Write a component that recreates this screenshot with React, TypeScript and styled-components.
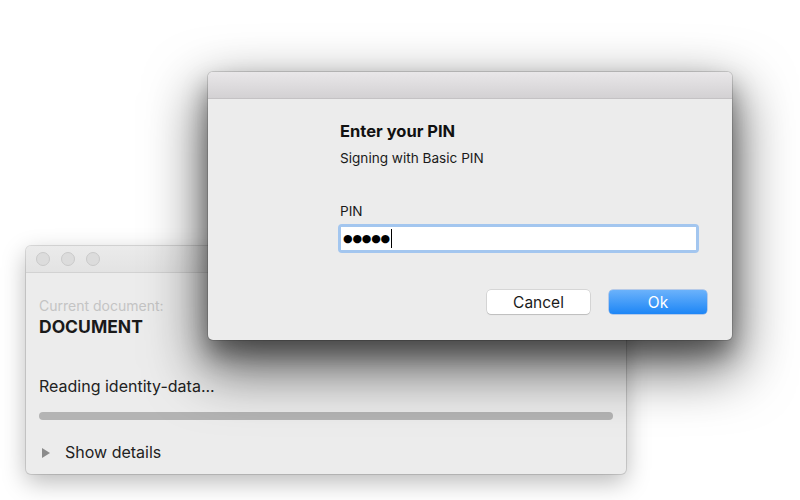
import React from "react";
import styled, { createGlobalStyle } from "styled-components";

const GlobalStyle = createGlobalStyle`
  html, body { margin: 0; padding: 0; background: #ffffff; }
  body { font-family: "Inter", "Roboto", "Liberation Sans", sans-serif; -webkit-font-smoothing: antialiased; }
  * { box-sizing: border-box; }
`;

const Desktop = styled.div`
  position: relative;
  width: 800px;
  height: 500px;
  overflow: hidden;
  background: #ffffff;
`;

const Window = styled.div<{ $left: number; $top: number; $w: number; $h: number; $active?: boolean }>`
  position: absolute;
  left: ${(p) => p.$left}px;
  top: ${(p) => p.$top}px;
  width: ${(p) => p.$w}px;
  height: ${(p) => p.$h}px;
  background: #ececec;
  border-radius: 5px;
  display: flex;
  flex-direction: column;
  overflow: hidden;
  box-shadow: ${(p) =>
    p.$active
      ? "0 0 0 1px rgba(0,0,0,0.14), 0 14px 24px rgba(0,0,0,0.35), 0 24px 55px 6px rgba(0,0,0,0.6)"
      : "0 0 0 1px rgba(0,0,0,0.12), 0 8px 24px rgba(0,0,0,0.28)"};
`;

const TitleBar = styled.div<{ $active?: boolean }>`
  height: 27px;
  flex: none;
  display: flex;
  align-items: center;
  gap: 11px;
  padding-left: 10px;
  background: ${(p) => (p.$active ? "linear-gradient(#e9e7e9, #d3d1d3)" : "linear-gradient(#ebebeb, #e3e3e3)")};
  border-bottom: 1px solid ${(p) => (p.$active ? "#c4c2c4" : "#d2d2d2")};
`;

const Light = styled.span`
  width: 14px;
  height: 14px;
  border-radius: 50%;
  background: #dcdcdc;
  border: 1px solid #c9c9c9;
`;

const BackBody = styled.div`
  flex: 1;
  display: flex;
  flex-direction: column;
  padding: 24px 13px 0 13px;
`;

const Caption = styled.div`
  font-size: 14px;
  line-height: 17px;
  color: #c4c4c4;
`;

const DocName = styled.div`
  font-size: 17.5px;
  line-height: 21px;
  font-weight: 700;
  color: #1a1a1a;
  margin-top: 2px;
`;

const Status = styled.div`
  font-size: 16px;
  line-height: 19px;
  color: #222;
  margin-top: 40px;
`;

const Progress = styled.div`
  height: 8px;
  border-radius: 4px;
  background: #b4b4b4;
  margin-top: 16px;
`;

const Disclosure = styled.div`
  display: flex;
  align-items: center;
  gap: 15px;
  margin-top: 23px;
  padding-left: 3px;
  font-size: 16px;
  line-height: 19px;
  color: #222;
`;

const Triangle = styled.span`
  width: 0;
  height: 0;
  border-top: 5px solid transparent;
  border-bottom: 5px solid transparent;
  border-left: 8px solid #8b8b8b;
`;

const DialogBody = styled.div`
  flex: 1;
  display: flex;
  flex-direction: column;
  padding: 22px 33px 0 130px;
`;

const DialogTitle = styled.div`
  font-size: 16.5px;
  line-height: 20px;
  font-weight: 700;
  color: #111;
  padding-left: 2px;
`;

const DialogText = styled.div<{ $mt: number }>`
  font-size: 13.6px;
  line-height: 16px;
  color: #1a1a1a;
  margin-top: ${(p) => p.$mt}px;
  padding-left: 2px;
`;

const Field = styled.div`
  margin-top: 5px;
  height: 29px;
  border-radius: 4px;
  background: #a3c6ef;
  padding: 3px;
`;

const FieldInner = styled.div`
  height: 23px;
  background: #ffffff;
  display: flex;
  align-items: center;
  padding-left: 2px;
`;

const Mask = styled.span`
  font-family: "DejaVu Sans", sans-serif;
  font-size: 11px;
  letter-spacing: -0.2px;
  color: #000;
`;

const Caret = styled.span`
  width: 1px;
  height: 19px;
  background: #000;
  margin-left: 1px;
`;

const Buttons = styled.div`
  display: flex;
  justify-content: flex-end;
  gap: 19px;
  margin-top: 37px;
  margin-right: -8px;
`;

const Button = styled.div<{ $primary?: boolean; $w: number }>`
  width: ${(p) => p.$w}px;
  height: 24px;
  border-radius: 4px;
  display: flex;
  align-items: center;
  justify-content: center;
  font-size: 15.5px;
  color: ${(p) => (p.$primary ? "#ffffff" : "#1a1a1a")};
  background: ${(p) => (p.$primary ? "linear-gradient(#6bb2fb, #1d86f6)" : "#ffffff")};
  box-shadow: ${(p) =>
    p.$primary ? "0 0 0 0.5px rgba(20,100,220,0.5)" : "0 0 0 0.5px rgba(0,0,0,0.18), 0 1px 1px rgba(0,0,0,0.12)"};
`;

export default function App() {
  return (
    <>
      <GlobalStyle />
      <Desktop>
        <Window $left={26} $top={246} $w={600} $h={228}>
          <TitleBar>
            <Light />
            <Light />
            <Light />
          </TitleBar>
          <BackBody>
            <Caption>Current document:</Caption>
            <DocName>DOCUMENT</DocName>
            <Status>Reading identity-data...</Status>
            <Progress />
            <Disclosure>
              <Triangle />
              Show details
            </Disclosure>
          </BackBody>
        </Window>
        <Window $left={208} $top={72} $w={524} $h={268} $active>
          <TitleBar $active />
          <DialogBody>
            <DialogTitle>Enter your PIN</DialogTitle>
            <DialogText $mt={9}>Signing with Basic PIN</DialogText>
            <DialogText $mt={37}>PIN</DialogText>
            <Field>
              <FieldInner>
                <Mask>●●●●●</Mask>
                <Caret />
              </FieldInner>
            </Field>
            <Buttons>
              <Button $w={103}>Cancel</Button>
              <Button $w={98} $primary>
                Ok
              </Button>
            </Buttons>
          </DialogBody>
        </Window>
      </Desktop>
    </>
  );
}
